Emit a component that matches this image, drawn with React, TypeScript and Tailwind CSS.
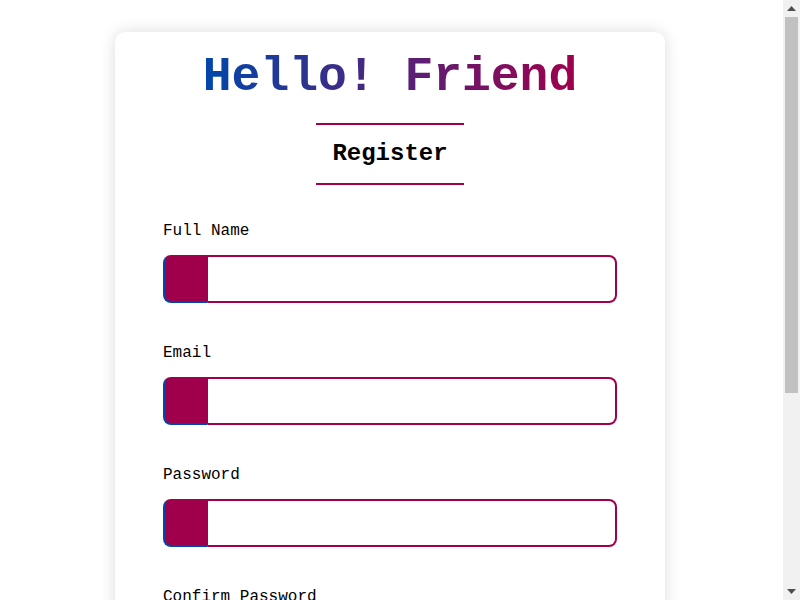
import React from 'react';

const fields = [
    { label: 'Full Name', type: 'text' },
    { label: 'Email', type: 'email' },
    { label: 'Password', type: 'password' },
    { label: 'Confirm Password', type: 'password' },
];

function Scrollbar() {
    return (
        <div className="fixed top-0 right-0 flex h-screen w-[17px] flex-col items-center bg-[#f1f1f1]">
            <div className="flex h-[17px] w-full items-center justify-center">
                <svg width="9" height="5" viewBox="0 0 9 5"><path d="M0 5 L4.5 0 L9 5 Z" fill="#505050" /></svg>
            </div>
            <div className="h-[376px] w-[13px] bg-[#c1c1c1]" />
            <div className="flex-1" />
            <div className="flex h-[17px] w-full items-center justify-center">
                <svg width="9" height="5" viewBox="0 0 9 5"><path d="M0 0 L9 0 L4.5 5 Z" fill="#505050" /></svg>
            </div>
        </div>
    );
}

export default function App() {
    return (
        <div className="min-h-screen w-[783px] bg-white py-8 font-['Liberation_Mono','Courier_New',monospace] text-black">
            <div className="ml-[115px] w-[550px] rounded-[10px] bg-white px-12 pt-[21px] pb-10 shadow-[0_0_16px_rgba(0,0,0,0.14)]">
                <div className="text-center">
                    <h1 className="inline-block bg-linear-to-r/srgb from-[#0047ab] to-[#a0004b] bg-clip-text text-5xl font-bold leading-none text-transparent">
                        Hello! Friend
                    </h1>
                </div>
                <div className="mt-[22px] text-center">
                    <h2 className="inline-block border-y-2 border-[#a0004b] px-4 py-[13px] text-2xl font-bold leading-8">
                        Register
                    </h2>
                </div>
                <form className="mt-[34px] flex flex-col gap-[38px]">
                    {fields.map((f) => (
                        <div key={f.label} className="flex flex-col gap-3">
                            <label className="text-base leading-6">{f.label}</label>
                            <div className="flex h-12">
                                <span className="w-[45px] rounded-l-lg border-2 border-[#a0004b] border-b-[#0047ab] border-l-[#0047ab] bg-[#a0004b]" />
                                <input
                                    type={f.type}
                                    className="flex-1 rounded-r-lg border-2 border-l-0 border-[#a0004b] bg-white px-3 text-base outline-none"
                                />
                            </div>
                        </div>
                    ))}
                    <button
                        type="button"
                        className="h-12 rounded-lg bg-linear-to-r/srgb from-[#0047ab] to-[#a0004b] text-lg font-bold text-white"
                    >
                        Register
                    </button>
                </form>
                <p className="mt-5 text-center text-sm">
                    Already have an account? <a className="font-bold text-[#a0004b]">Login</a>
                </p>
            </div>
            <Scrollbar />
        </div>
    );
}
